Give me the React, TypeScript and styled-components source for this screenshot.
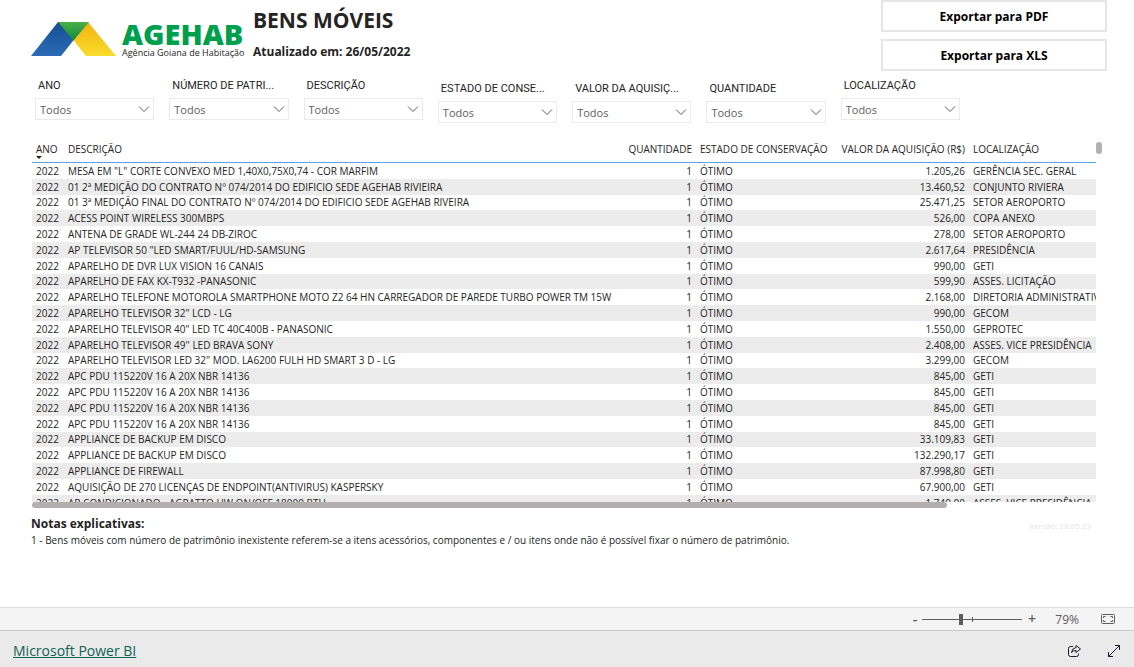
import React from 'react';
import styled, { createGlobalStyle } from 'styled-components';

const GlobalStyle = createGlobalStyle`
  * { box-sizing: border-box; }
  body {
    margin: 0;
    background: #fff;
    color: #252423;
    font-family: "Open Sans", "Noto Sans", sans-serif;
  }
`;

const Page = styled.div`
  display: flex;
  flex-direction: column;
  min-height: 100vh;
`;

const Report = styled.main`
  flex: 1;
  padding: 0 27px 0 31px;
`;

const Header = styled.header`
  display: flex;
  align-items: flex-start;
  height: 72px;
`;

const Brand = styled.div`
  display: flex;
  gap: 6px;
  width: 222px;
  padding-top: 20px;
`;

const BrandMark = styled.svg`
  flex: none;
  width: 85px;
  height: 38px;
`;

const BrandText = styled.div`
  display: flex;
  flex-direction: column;
  white-space: nowrap;
`;

const BrandName = styled.span`
  color: #009f4d;
  font-size: 29px;
  font-weight: 800;
  line-height: 27px;
`;

const BrandTagline = styled.span`
  font-family: "Open Sans", sans-serif;
  font-size: 9px;
  font-weight: 500;
  line-height: 12px;
`;

const Heading = styled.div`
  flex: 1;
  white-space: nowrap;
`;

const Title = styled.h1`
  margin: 0 0 8px;
  padding-top: 6px;
  font-size: 21px;
  font-weight: 700;
  line-height: 28px;
`;

const Updated = styled.p`
  margin: 0;
  font-size: 12px;
  font-weight: 700;
  line-height: 20px;
`;

const ExportActions = styled.div`
  display: flex;
  flex-direction: column;
  gap: 7px;
  width: 226px;
`;

const ExportButton = styled.button`
  height: 32px;
  padding: 2px 0 0;
  border: 2px solid #e6e6e6;
  background: #fff;
  color: #000;
  font: 700 12px/20px "Open Sans", sans-serif;
`;

const Filters = styled.section`
  display: grid;
  grid-template-columns: repeat(7, 1fr);
  gap: 15px;
  max-width: 929px;
  height: 66px;
  padding: 6px 0 0 4px;
`;

const Filter = styled.div<{ $lowered?: boolean }>`
  padding-top: ${(p) => (p.$lowered ? 3 : 0)}px;
`;

const FilterLabel = styled.label`
  display: block;
  height: 20px;
  padding-left: 3px;
  font: 11px/16px Roboto, sans-serif;
  white-space: nowrap;
`;

const SelectBox = styled.div`
  display: grid;
  align-items: center;
  height: 22px;
  border: 1px solid #eaeaea;

  > * { grid-area: 1 / 1; }
`;

const Select = styled.select`
  appearance: none;
  width: 100%;
  height: 20px;
  padding: 2px 4px 0;
  border: 0;
  background: transparent;
  color: #605e5c;
  font: 11px/18px "Open Sans", sans-serif;
`;

const Chevron = styled.svg`
  justify-self: end;
  width: 12px;
  height: 8px;
  margin-right: 3px;
  pointer-events: none;
`;

const TablePanel = styled.section`
  display: grid;
  grid-template-columns: 1fr 11px;
  padding-left: 1px;
`;

const TableView = styled.div`
  height: 364px;
  overflow: hidden;
`;

const VerticalBar = styled.div`
  width: 6px;
  height: 12px;
  margin-top: 4px;
  border-radius: 3px;
  background: #b3b0ad;
`;

const HorizontalBar = styled.div`
  width: 86%;
  height: 6px;
  border-radius: 3px;
  background: #b3b0ad;
`;

const Table = styled.table`
  width: 100%;
  border-collapse: separate;
  border-spacing: 0;
  table-layout: fixed;
  font-size: 10px;
  white-space: nowrap;

  tbody tr { height: 16px; line-height: 16px; }
  tbody tr:nth-child(5n + 3) { height: 15px; line-height: 15px; }
  tbody tr:nth-child(even) { background: #ececec; }
`;

const Col = styled.col<{ $width?: number }>`
  width: ${(p) => (p.$width ? `${p.$width}px` : 'auto')};
`;

const HeadCell = styled.th<{ $end?: boolean }>`
  height: 25px;
  padding: 4px 4px 6px;
  border-bottom: 1px solid #5aa5e6;
  font-weight: 400;
  line-height: 14px;
  text-align: ${(p) => (p.$end ? 'right' : 'left')};
`;

const SortMark = styled.svg`
  position: absolute;
  width: 6px;
  height: 3px;
  margin: 14px 0 0 -22px;
`;

const Cell = styled.td<{ $end?: boolean }>`
  padding: 0 4px;
  overflow: hidden;
  text-align: ${(p) => (p.$end ? 'right' : 'left')};
`;

const Notes = styled.section`
  display: flex;
  justify-content: space-between;
  padding: 8px 16px 0 0;
`;

const NotesTitle = styled.h2`
  margin: 0;
  font-size: 12px;
  font-weight: 700;
  line-height: 16px;
`;

const NotesText = styled.p`
  margin: 0;
  font-size: 10px;
  line-height: 16px;
`;

const Version = styled.span`
  font-size: 8px;
  line-height: 20px;
  color: #e4e4e4;
`;

const ZoomBar = styled.div`
  display: flex;
  align-items: center;
  justify-content: flex-end;
  height: 23px;
  padding-right: 18px;
  border-top: 1px solid #dcdcdc;
  background: #f4f4f4;
  color: #605e5c;
`;

const ZoomButton = styled.button`
  width: 14px;
  padding: 0;
  border: 0;
  background: none;
  color: inherit;
  font: 600 14px/20px "Open Sans", sans-serif;
`;

const ZoomRange = styled.input`
  appearance: none;
  width: 100px;
  height: 11px;
  margin: 0 3px 0 0;
  background:
    linear-gradient(#605e5c, #605e5c) 50px 3px / 1px 5px no-repeat,
    linear-gradient(#605e5c, #605e5c) 0 5px / 100% 1px no-repeat;

  &::-webkit-slider-thumb {
    appearance: none;
    width: 4px;
    height: 11px;
    background: #605e5c;
  }
`;

const ZoomValue = styled.span`
  width: 40px;
  margin-right: 21px;
  text-align: right;
  font-size: 12px;
`;

const IconButton = styled.button`
  display: flex;
  padding: 0;
  border: 0;
  background: none;
  color: inherit;
`;

const Footer = styled.footer`
  display: flex;
  align-items: center;
  justify-content: space-between;
  height: 37px;
  padding: 4px 13px 0;
  border-top: 1px solid #c8c8c8;
  background: #eaeaea;
`;

const PowerBiLink = styled.a`
  color: #116356;
  font-size: 14px;
  line-height: 20px;
`;

const FooterActions = styled.div`
  display: flex;
  gap: 25px;
  color: #1b1a2e;
`;

const filters = [
  { id: 'ano', label: 'ANO' },
  { id: 'patrimonio', label: 'NÚMERO DE PATRI...' },
  { id: 'descricao', label: 'DESCRIÇÃO' },
  { id: 'estado', label: 'ESTADO DE CONSE...', lowered: true },
  { id: 'valor', label: 'VALOR DA AQUISIÇ...', lowered: true },
  { id: 'quantidade', label: 'QUANTIDADE', lowered: true },
  { id: 'localizacao', label: 'LOCALIZAÇÃO' },
];

const rows: [string, string, string][] = [
  ['MESA EM "L" CORTE CONVEXO MED 1,40X0,75X0,74 - COR MARFIM', '1.205,26', 'GERÊNCIA SEC. GERAL'],
  ['01 2ª MEDIÇÃO DO CONTRATO Nº 074/2014 DO EDIFICIO SEDE AGEHAB RIVIEIRA', '13.460,52', 'CONJUNTO RIVIERA'],
  ['01 3ª MEDIÇÃO FINAL DO CONTRATO Nº 074/2014 DO EDIFICIO SEDE AGEHAB RIVEIRA', '25.471,25', 'SETOR AEROPORTO'],
  ['ACESS POINT WIRELESS 300MBPS', '526,00', 'COPA ANEXO'],
  ['ANTENA DE GRADE WL-244 24 DB-ZIROC', '278,00', 'SETOR AEROPORTO'],
  ['AP TELEVISOR 50 "LED SMART/FUUL/HD-SAMSUNG', '2.617,64', 'PRESIDÊNCIA'],
  ['APARELHO DE DVR LUX VISION 16 CANAIS', '990,00', 'GETI'],
  ['APARELHO DE FAX KX-T932 -PANASONIC', '599,90', 'ASSES. LICITAÇÃO'],
  ['APARELHO TELEFONE MOTOROLA SMARTPHONE MOTO Z2 64 HN CARREGADOR DE PAREDE TURBO POWER TM 15W', '2.168,00', 'DIRETORIA ADMINISTRATIVA'],
  ['APARELHO TELEVISOR 32" LCD - LG', '990,00', 'GECOM'],
  ['APARELHO TELEVISOR 40" LED TC 40C400B - PANASONIC', '1.550,00', 'GEPROTEC'],
  ["APARELHO TELEVISOR 49'' LED BRAVA SONY", '2.408,00', 'ASSES. VICE PRESIDÊNCIA'],
  ['APARELHO TELEVISOR LED 32" MOD. LA6200 FULH HD SMART 3 D - LG', '3.299,00', 'GECOM'],
  ['APC PDU 115220V 16 A 20X NBR 14136', '845,00', 'GETI'],
  ['APC PDU 115220V 16 A 20X NBR 14136', '845,00', 'GETI'],
  ['APC PDU 115220V 16 A 20X NBR 14136', '845,00', 'GETI'],
  ['APC PDU 115220V 16 A 20X NBR 14136', '845,00', 'GETI'],
  ['APPLIANCE DE BACKUP EM DISCO', '33.109,83', 'GETI'],
  ['APPLIANCE DE BACKUP EM DISCO', '132.290,17', 'GETI'],
  ['APPLIANCE DE FIREWALL', '87.998,80', 'GETI'],
  ['AQUISIÇÃO DE 270 LICENÇAS DE ENDPOINT(ANTIVIRUS) KASPERSKY', '67.900,00', 'GETI'],
  ['AR CONDICIONADO - AGRATTO HW ON/OFF 18000 BTU', '1.740,00', 'ASSES. VICE PRESIDÊNCIA'],
];

export default function App() {
  return (
    <Page>
      <GlobalStyle />
      <Report>
        <Header>
          <Brand>
            <BrandMark viewBox="0 0 85 38" aria-hidden="true">
              <defs>
                <linearGradient id="blue" x1="0" y1="0" x2="0" y2="1">
                  <stop offset="0" stopColor="#164f93" />
                  <stop offset="1" stopColor="#2a6cb5" />
                </linearGradient>
                <linearGradient id="yellow" x1="0" y1="0" x2="0" y2="1">
                  <stop offset="0" stopColor="#f2b30f" />
                  <stop offset="1" stopColor="#f9dc2b" />
                </linearGradient>
                <linearGradient id="green" x1="0" y1="0" x2="0" y2="1">
                  <stop offset="0" stopColor="#4caf46" />
                  <stop offset="1" stopColor="#0c8a3e" />
                </linearGradient>
              </defs>
              <path d="M27 2 L0 36 H30 L57 2Z" fill="url(#blue)" />
              <path d="M57 2 L85 36 H55 L28 2Z" fill="url(#yellow)" />
              <path d="M27 2 H58 L42.500 20.500Z" fill="url(#green)" />
            </BrandMark>
            <BrandText>
              <BrandName>AGEHAB</BrandName>
              <BrandTagline>Agência Goiana de Habitação</BrandTagline>
            </BrandText>
          </Brand>
          <Heading>
            <Title>BENS MÓVEIS</Title>
            <Updated>Atualizado em: 26/05/2022</Updated>
          </Heading>
          <ExportActions>
            <ExportButton type="button">Exportar para PDF</ExportButton>
            <ExportButton type="button">Exportar para XLS</ExportButton>
          </ExportActions>
        </Header>

        <Filters>
          {filters.map((f) => (
            <Filter key={f.id} $lowered={f.lowered}>
              <FilterLabel htmlFor={f.id}>{f.label}</FilterLabel>
              <SelectBox>
                <Select id={f.id}>
                  <option>Todos</option>
                </Select>
                <Chevron viewBox="0 0 12 8" fill="none" stroke="#605e5c">
                  <path d="M1 1.500 L6 6.500 L11 1.500" />
                </Chevron>
              </SelectBox>
            </Filter>
          ))}
        </Filters>

        <TablePanel>
          <TableView>
            <Table>
              <colgroup>
                <Col $width={32} />
                <Col />
                <Col $width={76} />
                <Col $width={138} />
                <Col $width={135} />
                <Col $width={127} />
              </colgroup>
              <thead>
                <tr>
                  <HeadCell>
                    ANO
                    <SortMark viewBox="0 0 6 3">
                      <path d="M0 0 H6 L3 3Z" fill="#252423" />
                    </SortMark>
                  </HeadCell>
                  <HeadCell>DESCRIÇÃO</HeadCell>
                  <HeadCell $end>QUANTIDADE</HeadCell>
                  <HeadCell>ESTADO DE CONSERVAÇÃO</HeadCell>
                  <HeadCell $end>VALOR DA AQUISIÇÃO (R$)</HeadCell>
                  <HeadCell>LOCALIZAÇÃO</HeadCell>
                </tr>
              </thead>
              <tbody>
                {rows.map(([description, value, place], i) => (
                  <tr key={i}>
                    <Cell>2022</Cell>
                    <Cell>{description}</Cell>
                    <Cell $end>1</Cell>
                    <Cell>ÓTIMO</Cell>
                    <Cell $end>{value}</Cell>
                    <Cell>{place}</Cell>
                  </tr>
                ))}
              </tbody>
            </Table>
          </TableView>
          <VerticalBar />
          <HorizontalBar />
        </TablePanel>

        <Notes>
          <div>
            <NotesTitle>Notas explicativas:</NotesTitle>
            <NotesText>
              1 - Bens móveis com número de patrimônio inexistente referem-se a itens acessórios, componentes e / ou
              itens onde não é possível fixar o número de patrimônio.
            </NotesText>
          </div>
          <Version>Versão: 28.05.23</Version>
        </Notes>
      </Report>

      <ZoomBar>
        <ZoomButton type="button" aria-label="Reduzir">-</ZoomButton>
        <ZoomRange type="range" min={0} max={100} defaultValue={39} aria-label="Zoom" />
        <ZoomButton type="button" aria-label="Ampliar">+</ZoomButton>
        <ZoomValue>79%</ZoomValue>
        <IconButton type="button" aria-label="Ajustar à página">
          <svg width="16" height="12" viewBox="0 0 16 12" fill="none" stroke="currentColor">
            <rect x="1.500" y="1.500" width="13" height="9" rx="1" />
            <path d="M5.500 3.500 H3.500 V5 M3.500 7 V8.500 H5.500 M10.500 3.500 H12.500 V5 M12.500 7 V8.500 H10.500" />
          </svg>
        </IconButton>
      </ZoomBar>

      <Footer>
        <PowerBiLink href="#">Microsoft Power BI</PowerBiLink>
        <FooterActions>
          <IconButton type="button" aria-label="Compartilhar">
            <svg width="15" height="14" viewBox="0 0 15 14" fill="none" stroke="currentColor" strokeLinejoin="round">
              <path d="M6 2.500 H3.500 Q1.500 2.500 1.500 4.500 V10.500 Q1.500 12.500 3.500 12.500 H9.500 Q11.500 12.500 11.500 10.500 V9.500" />
              <path d="M9 1.500 L13.500 5 L9 8.500 V6.500 Q6 6.500 4.500 8.500 Q5 4 9 3.500Z" />
            </svg>
          </IconButton>
          <IconButton type="button" aria-label="Tela inteira">
            <svg width="14" height="14" viewBox="0 0 14 14" fill="none" stroke="currentColor">
              <path d="M1.500 12.500 L12.500 1.500 M8 1.500 H12.500 V6 M1.500 8 V12.500 H6" />
            </svg>
          </IconButton>
        </FooterActions>
      </Footer>
    </Page>
  );
}
